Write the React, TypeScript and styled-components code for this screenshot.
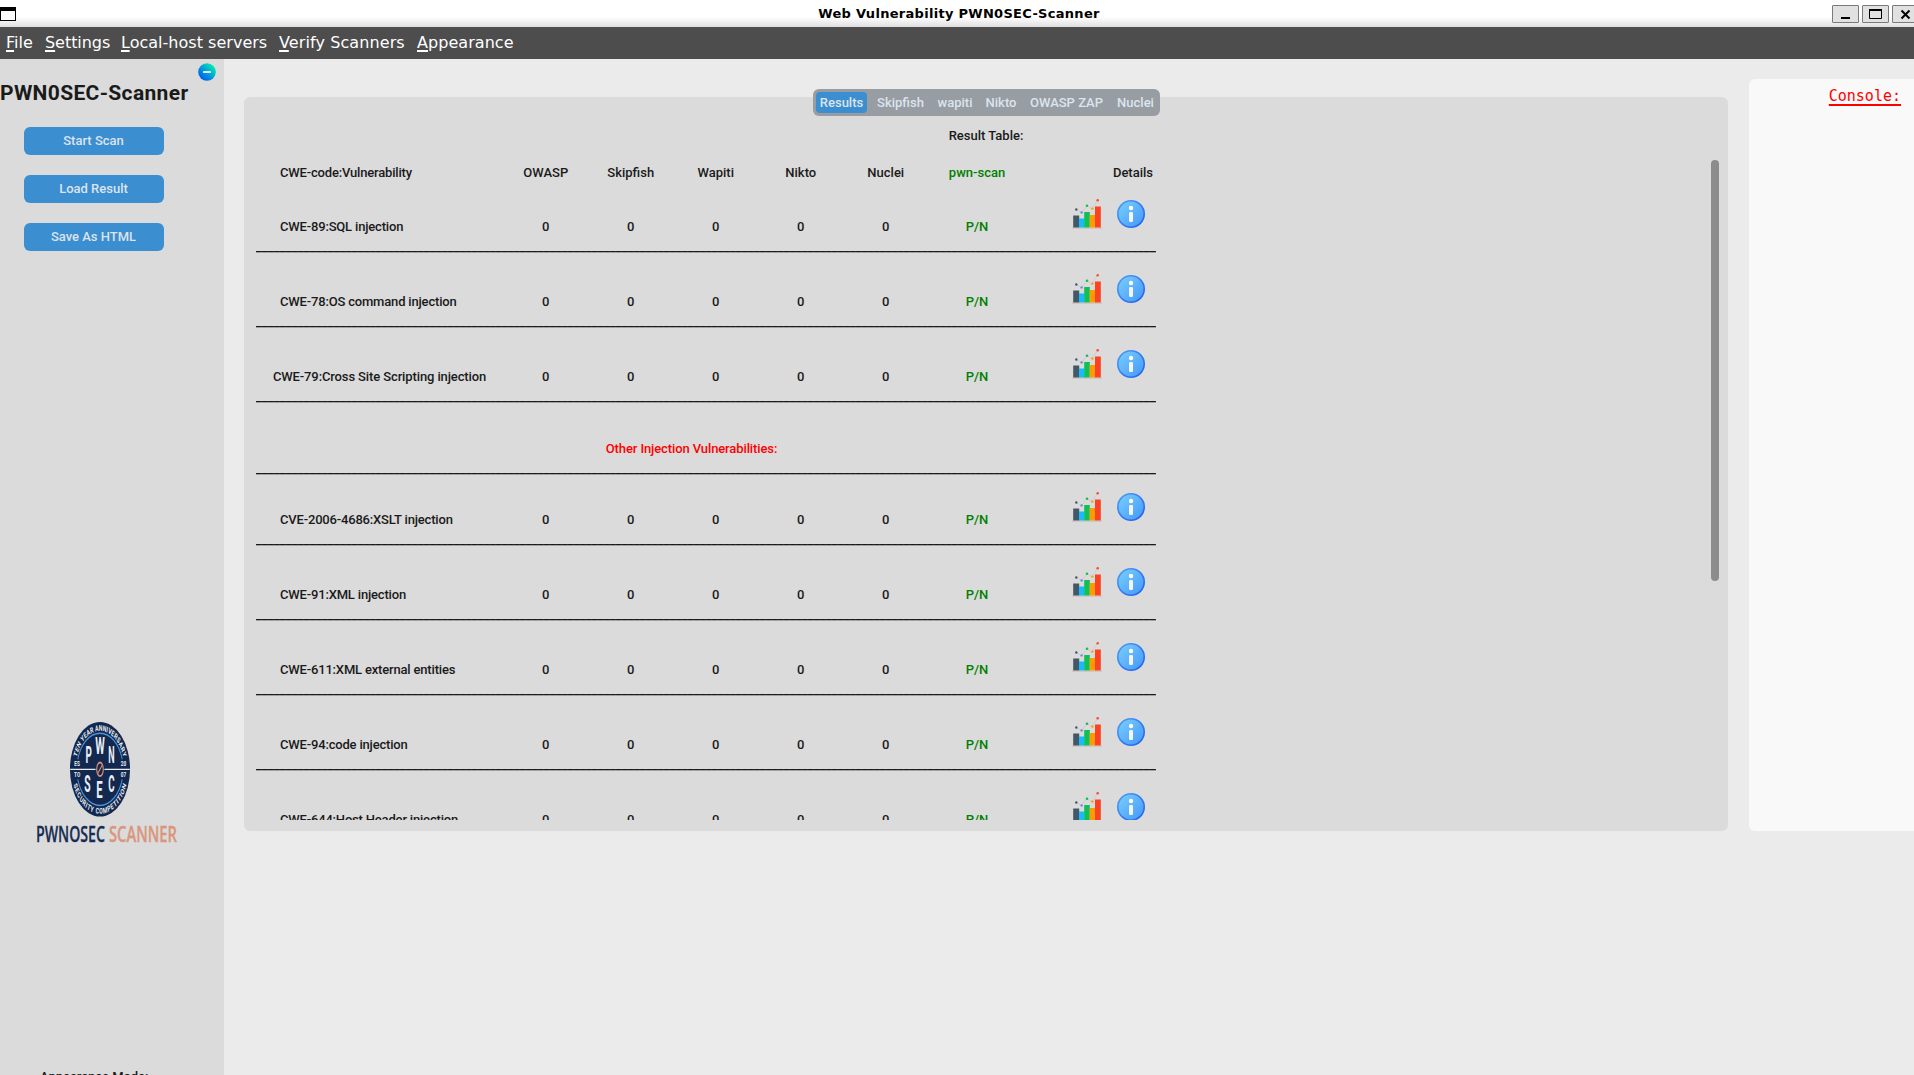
import React from 'react';
import styled, { createGlobalStyle } from 'styled-components';

const Global = createGlobalStyle`
  html, body { margin: 0; padding: 0; overflow: hidden; }
  *, *::before, *::after { box-sizing: border-box; }
`;

const Window = styled.div`
  display: flex;
  flex-direction: column;
  width: 1914px;
  height: 1075px;
  overflow: hidden;
  background: #ebebeb;
  color: #1a1a1a;
  font: 500 13px/16px Roboto, "Liberation Sans", sans-serif;
  white-space: nowrap;
`;

const TitleBar = styled.header`
  flex: none;
  display: grid;
  grid-template-columns: 87px 1fr 87px;
  align-items: start;
  height: 27px;
  background: linear-gradient(#fff 0, #fff 17px, #dedede 27px);
`;

const WindowIcon = styled.div`
  width: 16px;
  height: 14px;
  margin-top: 7px;
  border: 1px solid #000;
  border-top-width: 4px;
  background: #fff;
`;

const WindowTitle = styled.h1`
  margin: 6px 0 0 4px;
  text-align: center;
  color: #000;
  font: bold 13px/16px "DejaVu Sans", sans-serif;
  letter-spacing: 0.29px;
`;

const WindowButtons = styled.div`
  display: flex;
  gap: 3px;
  margin: 5px 0 0 5px;
`;

const WindowButton = styled.button`
  flex: none;
  width: 27px;
  height: 18px;
  padding: 0;
  border: 1px solid #7a7a7a;
  border-radius: 1px;
  background: #e1e1e1;
  svg { display: block; }
`;

const MenuBar = styled.nav`
  flex: none;
  display: flex;
  height: 32px;
  padding: 0 6px;
  gap: 12px;
  background: #4d4d4d;
  color: #fff;
  font: 16px/31px "DejaVu Sans", sans-serif;
`;

const MenuItem = styled.span<{ $width: number; $spacing: number }>`
  width: ${(p) => p.$width}px;
  letter-spacing: ${(p) => p.$spacing}px;
  &::first-letter {
    text-decoration: underline;
    text-decoration-thickness: 2px;
    text-underline-offset: 2px;
  }
`;

const Body = styled.div`
  flex: 1;
  min-height: 0;
  display: flex;
`;

const Sidebar = styled.aside`
  flex: none;
  display: flex;
  flex-direction: column;
  width: 224px;
  background: #dbdbdb;
`;

const CollapseRow = styled.div`
  display: flex;
  justify-content: flex-end;
  height: 21px;
  padding: 4px 8px 0 0;
`;

const Brand = styled.h2`
  margin: 0;
  font: bold 21px/26px Roboto, "Liberation Sans", sans-serif;
  letter-spacing: 0.35px;
`;

const Actions = styled.div`
  display: flex;
  flex-direction: column;
  gap: 20px;
  margin: 21px 0 0 24px;
`;

const ActionButton = styled.button`
  width: 140px;
  height: 28px;
  padding: 0 1px 0 0;
  border: 0;
  border-radius: 6px;
  background: #3b8ed0;
  color: #dce4ee;
  font: inherit;
`;

const LogoBox = styled.div`
  margin: 469px 0 0 30px;
  height: 134px;
`;

const ModeLabel = styled.div`
  margin: 215px 0 0 40px;
  letter-spacing: -0.05px;
`;

const Main = styled.main`
  flex: 1;
  min-width: 0;
  display: flex;
  align-items: flex-start;
  gap: 21px;
  padding-left: 20px;
`;

const ResultsPanel = styled.section`
  flex: none;
  display: flex;
  flex-direction: column;
  width: 1484px;
  height: 734px;
  margin-top: 38px;
  border-radius: 6px;
  background: #dbdbdb;
`;

const Tabs = styled.div`
  flex: none;
  align-self: center;
  display: flex;
  width: 347px;
  height: 27px;
  margin: -8px 0 0 1px;
  padding: 3px 0 3px 3px;
  border-radius: 6px;
  background: #979da2;
`;

const Tab = styled.button<{ $width: number; $active?: boolean }>`
  flex: none;
  width: ${(p) => p.$width}px;
  height: 21px;
  padding: 0;
  border: 0;
  border-radius: 4px;
  background: ${(p) => (p.$active ? '#3b8ed0' : 'transparent')};
  color: #dce4ee;
  font: inherit;
  line-height: 20px;
  &:last-child { padding-left: 4px; }
`;

const TableCaption = styled.div`
  flex: none;
  height: 33px;
  padding-top: 12px;
  text-align: center;
`;

const ScrollArea = styled.div`
  display: flex;
  justify-content: space-between;
  align-items: flex-start;
  height: 671px;
  padding: 0 9px 0 12px;
  overflow: hidden;
`;

const Scrollbar = styled.div`
  width: 8px;
  height: 421px;
  margin-top: 11px;
  border-radius: 4px;
  background: #8c8c8c;
`;

const Table = styled.div`
  width: 900px;
`;

const TableRow = styled.div<{ $height: number }>`
  display: grid;
  grid-template-columns: 247px repeat(5, 85px) 98px 130px;
  align-items: end;
  height: ${(p) => p.$height}px;
  padding-bottom: 16px;
`;

const HeaderRow = styled(TableRow)`
  padding-bottom: 4px;
`;

const NameCell = styled.div`
  display: flex;
  justify-content: center;
`;

const Name = styled.span<{ $spacing?: number }>`
  min-width: 199px;
  letter-spacing: ${(p) => p.$spacing ?? -0.18}px;
`;

const Cell = styled.div<{ $green?: boolean }>`
  padding-left: ${(p) => (p.$green ? 0 : 0.5)}px;
  text-align: center;
  color: ${(p) => (p.$green ? '#008000' : 'inherit')};
`;

const DetailsHead = styled.div`
  padding-right: 3px;
  text-align: right;
`;

const IconCell = styled.div`
  display: flex;
  align-items: flex-start;
  gap: 15px;
  height: 36px;
  padding: 0 0 5px 46px;
  svg { display: block; flex: none; }
  svg + svg { margin-top: 1px; }
`;

const Section = styled.div<{ $height: number }>`
  display: flex;
  align-items: flex-end;
  justify-content: center;
  height: ${(p) => p.$height}px;
  padding: 0 29px 16px 0;
  color: #f00;
  letter-spacing: -0.11px;
`;

const Rule = styled.div`
  height: 2px;
  background: repeating-linear-gradient(90deg, #1a1a1a 0 5px, #303030 5px 6px) 0 0 / 100% 1px no-repeat,
    #a0a0a0;
`;

const ConsolePanel = styled.section`
  flex: 1;
  height: 752px;
  margin-top: 20px;
  padding: 7px 13px 0 0;
  border-radius: 6px 0 0 6px;
  background: #f9f9fa;
  text-align: right;
`;

const ConsoleTitle = styled.span`
  color: #f00;
  font: 15px/20px "DejaVu Sans Mono", monospace;
  text-decoration: underline;
  text-decoration-thickness: 2px;
  text-underline-offset: 3px;
  text-decoration-skip-ink: none;
`;

const ChartIcon = () => (
  <svg width="30" height="30" viewBox="0 0 30 30">
    <path d="M4.5 10.5 9.5 13.5 15 7 20 9.500 25.500 1.500" fill="none" stroke="#d9c3b8" strokeWidth=".7" />
    <rect x="0" y="28.500" width="30" height="1.300" fill="#d3c2bb" />
    <rect x="1.200" y="16.500" width="6" height="12" fill="#455664" />
    <rect x="7" y="19.500" width="5.500" height="9" fill="#19b9fa" />
    <rect x="12.200" y="13" width="5.600" height="15.500" fill="#0fc057" />
    <rect x="17.700" y="16" width="5.500" height="12.500" fill="#ff9b00" />
    <rect x="23" y="7.500" width="5.800" height="21" fill="#fb4222" />
    <circle cx="4.300" cy="10.500" r="1.200" fill="#455664" />
    <circle cx="9.600" cy="13.400" r="1.200" fill="#5f8ee8" />
    <circle cx="15" cy="6.800" r="1.300" fill="#0fc057" />
    <circle cx="20.300" cy="9.600" r="1.200" fill="#ff9b00" />
    <circle cx="25.700" cy="1.300" r="1.300" fill="#f0523a" />
  </svg>
);

const InfoIcon = () => (
  <svg width="28" height="28" viewBox="0 0 28 28">
    <defs>
      <linearGradient id="infoFill" x1="0" y1="0" x2="1" y2="1">
        <stop offset="0.1" stopColor="#75cafb" />
        <stop offset="1" stopColor="#4296fa" />
      </linearGradient>
      <linearGradient id="infoRim" x1="0" y1="0" x2="1" y2="1">
        <stop offset="0.1" stopColor="#4a98f5" />
        <stop offset="1" stopColor="#1f5df0" />
      </linearGradient>
    </defs>
    <circle cx="14" cy="14" r="13.200" fill="url(#infoFill)" stroke="url(#infoRim)" strokeWidth="1.600" />
    <circle cx="14" cy="8" r="2.200" fill="#fff" />
    <rect x="12" y="12" width="4" height="10" rx="1.300" fill="#f2f5fa" />
  </svg>
);

const CollapseIcon = () => (
  <svg width="18" height="18" viewBox="0 0 18 18">
    <defs>
      <linearGradient id="collapse" x1="0.1" y1="0.9" x2="0.85" y2="0.1">
        <stop offset="0" stopColor="#0055f5" />
        <stop offset="0.5" stopColor="#009fd6" />
        <stop offset="1" stopColor="#00f0b4" />
      </linearGradient>
    </defs>
    <circle cx="9" cy="9" r="8.800" fill="url(#collapse)" />
    <rect x="5" y="8" width="8" height="2" rx=".5" fill="#d6e9f2" />
  </svg>
);

const letters: [string, number, number][] = [
  ['P', -18, -6],
  ['W', 0, -15],
  ['N', 18, -6],
  ['S', -20, 23],
  ['E', -1, 29],
  ['C', 18, 23],
];

const LogoSvg = styled.svg`
  display: block;
`;

const Logo = () => (
  <LogoSvg width="160" height="134" viewBox="30 720 160 134">
    <defs>
      <path id="arcTop" d="M-38.500 0A38.500 38.500 0 0 1 38.500 0" />
      <path id="arcBottom" d="M-44.500 0A44.500 44.500 0 0 0 44.500 0" />
    </defs>
    <g transform="translate(100 769.300) scale(.635 1)">
      <circle r="47.300" fill="#12284f" />
      <path d="M-35-10A36.500 36.500 0 0 1 35-10M-35 10A36.500 36.500 0 0 0 35 10" fill="none" stroke="#4a94d8" strokeWidth="1.500" />
      <g fill="#e9edf3" fontFamily="Roboto, sans-serif" fontWeight="700">
        <text fontSize="8" textAnchor="middle">
          <textPath href="#arcTop" startOffset="50%" textLength="97" lengthAdjust="spacing">TEN YEAR ANNIVERSARY</textPath>
        </text>
        <text fontSize="8" textAnchor="middle">
          <textPath href="#arcBottom" startOffset="50%" textLength="108" lengthAdjust="spacing">SECURITY COMPETITION</textPath>
        </text>
        {letters.map(([ch, x, y]) => (
          <text key={ch} x={x} y={y} fontSize="23" textAnchor="middle" textLength={ch === 'W' ? 15 : 10} lengthAdjust="spacingAndGlyphs">{ch}</text>
        ))}
        <g fontSize="7.500" textAnchor="middle">
          <text x="-36" y="-3">ES</text>
          <text x="-36" y="8">TO</text>
          <text x="37" y="-3">20</text>
          <text x="37" y="8">07</text>
        </g>
      </g>
      <path d="M-47 0H-7M7 0H47" stroke="#e9edf3" strokeWidth="1.200" />
      <ellipse rx="5.200" ry="6.800" fill="none" stroke="#d58e76" strokeWidth="1.800" />
      <path d="M-3.500 4 3.500-4" stroke="#d58e76" strokeWidth="1.500" />
    </g>
    <g fontFamily="'Open Sans', sans-serif" fontSize="21.500" fontWeight="600">
      <text x="36" y="841.500" fill="#182c53" stroke="#182c53" strokeWidth=".3" textLength="69" lengthAdjust="spacingAndGlyphs">PWNOSEC</text>
      <text x="109" y="841.500" fill="#d9967d" stroke="#d9967d" strokeWidth=".3" textLength="68" lengthAdjust="spacingAndGlyphs">SCANNER</text>
    </g>
  </LogoSvg>
);

const menu: [string, number, number][] = [
  ['File', 27, 0],
  ['Settings', 64, -0.05],
  ['Local-host servers', 146, 0.02],
  ['Verify Scanners', 126, 0.1],
  ['Appearance', 97, 0.05],
];

const tabs: [string, number][] = [
  ['Results', 51],
  ['Skipfish', 67],
  ['wapiti', 42],
  ['Nikto', 50],
  ['OWASP ZAP', 81],
  ['Nuclei', 53],
];

const scanners = ['OWASP', 'Skipfish', 'Wapiti', 'Nikto', 'Nuclei'];

const injections = ['CWE-89:SQL injection', 'CWE-78:OS command injection', 'CWE-79:Cross Site Scripting injection'];

const otherInjections = [
  'CVE-2006-4686:XSLT injection',
  'CWE-91:XML injection',
  'CWE-611:XML external entities',
  'CWE-94:code injection',
  'CWE-644:Host Header injection',
];

const ResultRow = ({ name, height = 73 }: { name: string; height?: number }) => (
  <>
    <TableRow $height={height}>
      <NameCell><Name $spacing={name.length > 32 ? -0.12 : undefined}>{name}</Name></NameCell>
      {scanners.map((s) => <Cell key={s}>0</Cell>)}
      <Cell $green>P/N</Cell>
      <IconCell><ChartIcon /><InfoIcon /></IconCell>
    </TableRow>
    <Rule />
  </>
);

export default function App() {
  return (
    <Window>
      <Global />
      <TitleBar>
        <WindowIcon />
        <WindowTitle>Web Vulnerability PWN0SEC-Scanner</WindowTitle>
        <WindowButtons>
          <WindowButton><svg width="25" height="16"><path d="M8 12h9" stroke="#000" strokeWidth="2" /></svg></WindowButton>
          <WindowButton><svg width="25" height="16"><path d="M6.500 3v9.500h12V3" fill="none" stroke="#000" /><path d="M6 4h13" stroke="#000" strokeWidth="2" /></svg></WindowButton>
          <WindowButton><svg width="25" height="16"><path d="m8.500 4.500 8 8m0-8-8 8" stroke="#000" strokeWidth="2" /></svg></WindowButton>
        </WindowButtons>
      </TitleBar>
      <MenuBar>
        {menu.map(([label, width, spacing]) => <MenuItem key={label} $width={width} $spacing={spacing}>{label}</MenuItem>)}
      </MenuBar>
      <Body>
        <Sidebar>
          <CollapseRow><CollapseIcon /></CollapseRow>
          <Brand>PWN0SEC-Scanner</Brand>
          <Actions>
            <ActionButton>Start Scan</ActionButton>
            <ActionButton>Load Result</ActionButton>
            <ActionButton>Save As HTML</ActionButton>
          </Actions>
          <LogoBox><Logo /></LogoBox>
          <ModeLabel>Appearance Mode:</ModeLabel>
        </Sidebar>
        <Main>
          <ResultsPanel>
            <Tabs>
              {tabs.map(([label, width], i) => <Tab key={label} $width={width} $active={i === 0}>{label}</Tab>)}
            </Tabs>
            <TableCaption>Result Table:</TableCaption>
            <ScrollArea>
              <Table>
                <HeaderRow $height={36}>
                  <NameCell><Name>CWE-code:Vulnerability</Name></NameCell>
                  {scanners.map((s) => <Cell key={s}>{s}</Cell>)}
                  <Cell $green>pwn-scan</Cell>
                  <DetailsHead>Details</DetailsHead>
                </HeaderRow>
                {injections.map((name, i) => <ResultRow key={name} name={name} height={i === 0 ? 66 : 73} />)}
                <Section $height={70}>Other Injection Vulnerabilities:</Section>
                <Rule />
                {otherInjections.map((name, i) => <ResultRow key={name} name={name} height={i === 0 ? 69 : 73} />)}
              </Table>
              <Scrollbar />
            </ScrollArea>
          </ResultsPanel>
          <ConsolePanel>
            <ConsoleTitle>Console:</ConsoleTitle>
          </ConsolePanel>
        </Main>
      </Body>
    </Window>
  );
}
